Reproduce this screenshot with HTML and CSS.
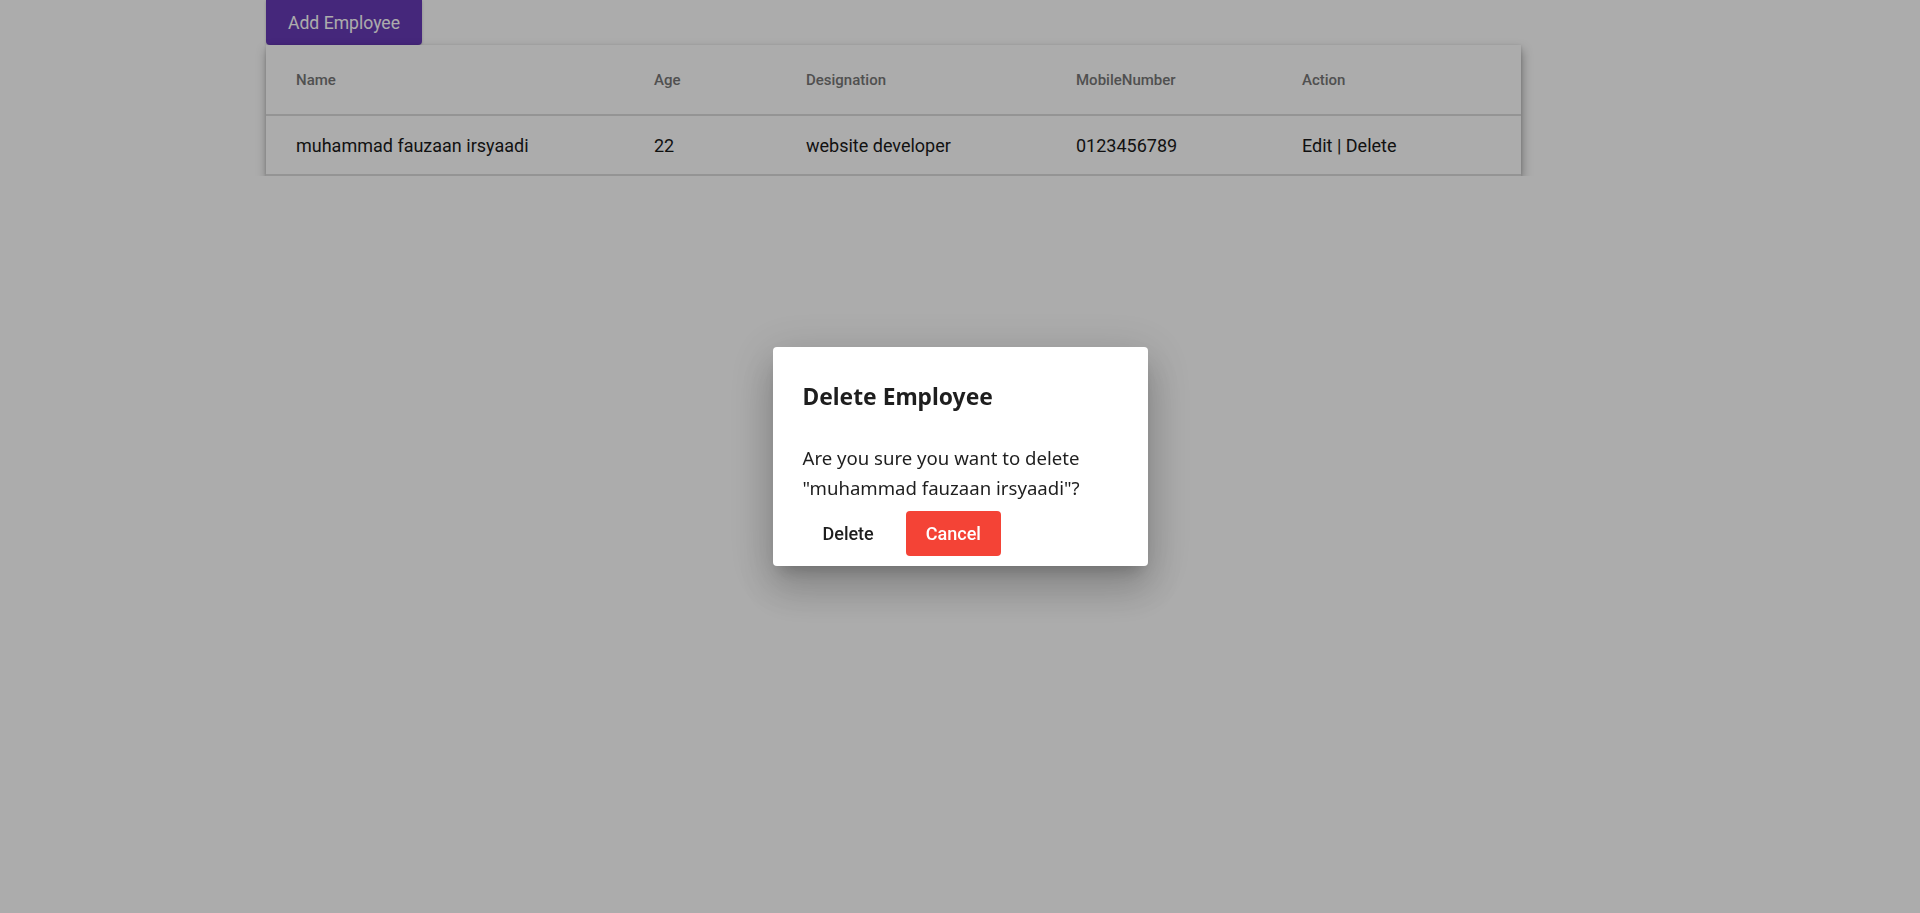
FILE: index.html
```html
<!DOCTYPE html>
<html>
<head>
<meta charset="utf-8">
<title>Employees</title>
<link rel="stylesheet" href="styles.css">
</head>
<body>
<div class="page">
  <button class="add-btn">Add Employee</button>
  <div class="card">
    <table class="table">
      <thead>
        <tr>
          <th class="c-name">Name</th>
          <th class="c-age">Age</th>
          <th class="c-des">Designation</th>
          <th class="c-mob">MobileNumber</th>
          <th class="c-act">Action</th>
        </tr>
      </thead>
      <tbody>
        <tr>
          <td>muhammad fauzaan irsyaadi</td>
          <td>22</td>
          <td>website developer</td>
          <td>0123456789</td>
          <td>Edit | Delete</td>
        </tr>
      </tbody>
    </table>
  </div>
</div>
<div class="overlay">
  <div class="dialog">
    <h2 class="dialog-title">Delete Employee</h2>
    <p class="dialog-text">Are you sure you want to delete "muhammad fauzaan irsyaadi"?</p>
    <div class="dialog-actions">
      <button class="btn btn-text">Delete</button>
      <button class="btn btn-red">Cancel</button>
    </div>
  </div>
</div>
</body>
</html>
```
FILE: styles.css
```css
html, body {
  margin: 0;
  padding: 0;
  background: #ffffff;
  font-family: Roboto, "Liberation Sans", sans-serif;
}
.page {
  padding-left: 266px;
  width: 1255px;
}
.add-btn {
  display: block;
  height: 45px;
  width: 156px;
  padding: 0;
  border: none;
  border-radius: 0 0 4px 4px;
  background: #673ab7;
  color: #ffffff;
  font-family: Roboto, sans-serif;
  font-size: 17.6px;
  font-weight: 400;
  text-align: center;
  box-shadow: 0 1px 3px rgba(0,0,0,0.2);
}
.card {
  background: #ffffff;
  box-shadow: 1px 5px 10px rgba(0,0,0,0.34), 0 1px 3px rgba(0,0,0,0.14);
}
.table {
  width: 100%;
  border-collapse: collapse;
  table-layout: fixed;
}
.table th, .table td {
  box-sizing: border-box;
  text-align: left;
  padding: 0 0 0 30px;
  white-space: nowrap;
  border-bottom: 2px solid #dcdcdc;
}
.table th {
  height: 70px;
  font-size: 15px;
  font-weight: 500;
  color: #777777;
}
.table td {
  height: 60px;
  font-size: 18px;
  font-weight: 400;
  color: #1a1a1a;
}
.c-name { width: 358px; }
.c-age { width: 152px; }
.c-des { width: 270px; }
.c-mob { width: 226px; }
.overlay {
  position: fixed;
  inset: 0;
  background: rgba(0,0,0,0.325);
  display: flex;
  align-items: center;
  justify-content: center;
}
.dialog {
  width: 375px;
  box-sizing: border-box;
  background: #ffffff;
  border-radius: 4px;
  padding: 0 30px 10px 30px;
  box-shadow: 0 11px 15px -7px rgba(0,0,0,0.2), 0 24px 38px 3px rgba(0,0,0,0.14), 0 9px 46px 8px rgba(0,0,0,0.12);
}
.dialog-title {
  margin: 0;
  padding: 34px 0 0 0;
  font-family: "Noto Sans", "Open Sans", sans-serif;
  font-size: 22.8px;
  font-weight: 700;
  line-height: 31px;
  color: #1e1e1e;
}
.dialog-text {
  margin: 0;
  padding: 31px 0 0 0;
  font-family: "Noto Sans", "Open Sans", sans-serif;
  font-size: 18.6px;
  line-height: 29.5px;
  color: #1e1e1e;
}
.dialog-actions {
  display: flex;
  gap: 12px;
  padding-top: 9px;
}
.btn {
  height: 45px;
  padding: 0 20px;
  border: none;
  border-radius: 4px;
  font-family: Roboto, sans-serif;
  font-size: 18px;
  font-weight: 500;
  cursor: pointer;
}
.btn-text {
  background: transparent;
  color: #1e1e1e;
}
.btn-red {
  background: #f44336;
  color: #ffffff;
}
```
